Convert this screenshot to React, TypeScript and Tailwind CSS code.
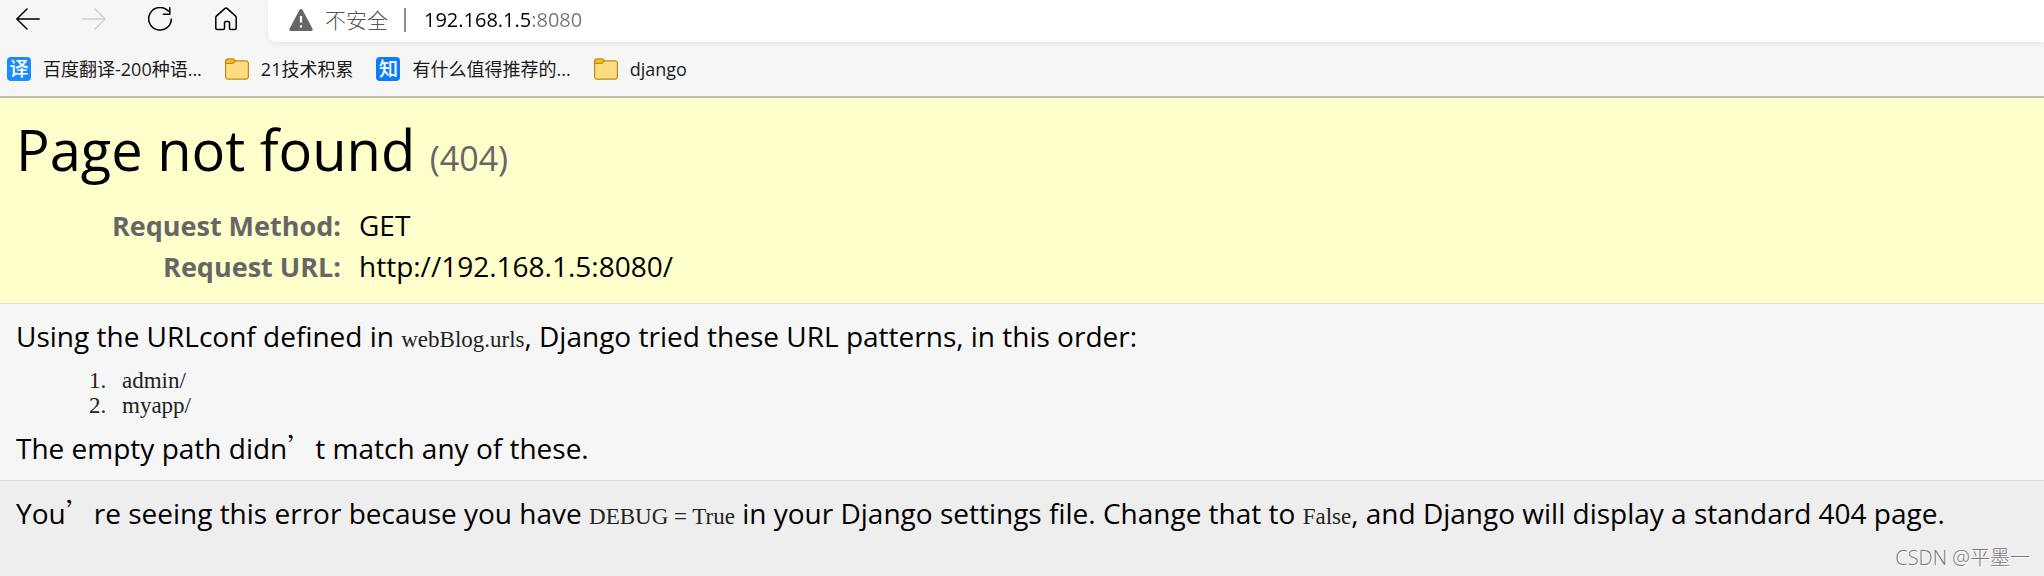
import type { ReactNode } from "react";

const PATTERNS = ["admin/", "myapp/"];

const META = [
  { label: "Request Method:", value: "GET" },
  { label: "Request URL:", value: "http://192.168.1.5:8080/" },
];

function NavButton({ label, disabled, children }: { label: string; disabled?: boolean; children: ReactNode }) {
  return (
    <button type="button" aria-label={label} disabled={disabled} className="text-black disabled:text-[#cfcfcf]">
      <svg viewBox="0 0 24 24" className="size-6" fill="none" stroke="currentColor" strokeWidth="1.5" strokeLinecap="round" strokeLinejoin="round">
        {children}
      </svg>
    </button>
  );
}

function FolderIcon() {
  return (
    <svg viewBox="0 0 24 24" className="size-6" strokeWidth="1.2" stroke="#c08a0c">
      <path d="M.6 4.5a2.5 2.5 0 0 1 2.5-2.5h5.2l2.4 1.9h10.2a2.5 2.5 0 0 1 2.5 2.5v13.2a2.5 2.5 0 0 1-2.5 2.5H3.1a2.5 2.5 0 0 1-2.5-2.5z" fill="#ffdc82" />
      <path d="M.6 4.5a2.5 2.5 0 0 1 2.5-2.5h4.7a1.8 1.8 0 0 1 1.3.5l1.3 1.4-1.6 1.8a1.8 1.8 0 0 1-1.3.6H.6z" fill="#f4bd2b" />
    </svg>
  );
}

function SiteIcon({ char, className }: { char: string; className: string }) {
  return (
    <span className={`flex size-6 items-center justify-center rounded-[4px] text-[19px] leading-6 font-medium text-white ${className}`}>
      {char}
    </span>
  );
}

function Bookmark({ icon, children }: { icon: ReactNode; children: ReactNode }) {
  return (
    <a href="#" className="flex items-center gap-3 text-[18px] leading-6 text-[#1a1a1a]">
      {icon}
      <span>{children}</span>
    </a>
  );
}

function Code({ children }: { children: ReactNode }) {
  return <code className="font-['Liberation_Serif',serif] text-[23px] leading-6 text-[#222]">{children}</code>;
}

// Full-width apostrophe, as the CJK font sets it
function Apostrophe() {
  return <span className="font-['Noto_Sans_CJK_SC',sans-serif] leading-6 font-light">’</span>;
}

function BrowserBar() {
  return (
    <header className="border-b-2 border-[#bdbdbd] bg-[#f6f6f6]">
      <div className="flex h-[42px]">
        <nav className="flex items-center gap-[42px] pr-[30px] pb-1 pl-4">
          <NavButton label="Back">
            <path d="M11 2 .8 12 11 22M.8 12h22.4" />
          </NavButton>
          <NavButton label="Forward" disabled>
            <path d="M13 2l10.2 10L13 22M23.2 12H.8" />
          </NavButton>
          <NavButton label="Refresh">
            <path d="M20.3 4.1A11.3 11.3 0 1 0 23.3 12M21.8.8v6.4h-6.4" />
          </NavButton>
          <NavButton label="Home">
            <path d="M1.8 10.6a2.2 2.2 0 0 1 .8-1.7L11 1.4a1.5 1.5 0 0 1 2 0l8.4 7.5a2.2 2.2 0 0 1 .8 1.7v10.6a1.3 1.3 0 0 1-1.3 1.3h-4.1a1.3 1.3 0 0 1-1.3-1.3v-5.4a1.3 1.3 0 0 0-1.3-1.3h-2.4a1.3 1.3 0 0 0-1.3 1.3v5.4a1.3 1.3 0 0 1-1.3 1.3H3.1a1.3 1.3 0 0 1-1.3-1.3z" />
          </NavButton>
        </nav>
        <div className="flex flex-1 items-center rounded-bl-lg bg-white pb-0.5 pl-[21px] shadow-[0_2px_6px_rgba(0,0,0,0.06)]">
          <svg viewBox="0 0 24 24" className="size-6" aria-hidden="true">
            <path d="M10.5 1.8a1.7 1.7 0 0 1 3 0l10 19a1.4 1.4 0 0 1-1.3 2.1H1.8a1.4 1.4 0 0 1-1.3-2.1z" fill="#666" />
            <path d="M12 8v6.5M12 17.2v2.2" stroke="#fff" strokeWidth="2.2" />
          </svg>
          <span className="ml-3 text-[21px] leading-6 font-light text-[#555]">不安全</span>
          <span className="ml-4 h-6 w-0.5 bg-[#909090]" />
          <input
            aria-label="Address"
            defaultValue="192.168.1.5:8080"
            className="ml-[18px] flex-1 bg-linear-to-r from-black from-[106px] to-[#767676] to-[106px] bg-clip-text text-[20px] leading-6 text-transparent caret-black outline-none"
          />
        </div>
      </div>
      <nav className="flex h-[54px] items-center gap-[23px] pl-[7px]">
        <Bookmark icon={<SiteIcon char="译" className="bg-[#1a8cff]" />}>百度翻译-200种语...</Bookmark>
        <Bookmark icon={<FolderIcon />}>21技术积累</Bookmark>
        <Bookmark icon={<SiteIcon char="知" className="bg-[#0a7cff]" />}>有什么值得推荐的...</Bookmark>
        <Bookmark icon={<FolderIcon />}>django</Bookmark>
      </nav>
    </header>
  );
}

export default function App() {
  return (
    <div className="relative min-h-screen bg-[#eee] font-['Open_Sans','Noto_Sans_CJK_SC',sans-serif] text-black">
      <BrowserBar />
      <main className="text-[28px] leading-10">
        <section className="border-b border-[#ddd] bg-[#ffffcc] px-4 pt-4 pb-4">
          <h1 className="text-[56px] leading-[70px]">
            Page not found <span className="text-[34px] text-[#666]">(404)</span>
          </h1>
          <table className="mt-3 leading-[41px]">
            <tbody>
              {META.map((row) => (
                <tr key={row.label}>
                  <th scope="row" className="w-[327px] pr-0.5 text-right text-[27px] font-bold text-[#666]">{row.label}</th>
                  <td className="pl-4">{row.value}</td>
                </tr>
              ))}
            </tbody>
          </table>
        </section>
        <section className="border-b border-[#ddd] bg-[#f6f6f6] px-4 py-3">
          <p>
            Using the URLconf defined in <Code>webBlog.urls</Code>, Django tried these URL patterns, in this order:
          </p>
          <ol className="mt-3 mb-2.5 list-decimal pl-24 font-['Liberation_Serif',serif] text-[23px] leading-[25px] text-[#222]">
            {PATTERNS.map((pattern) => (
              <li key={pattern} className="pl-2.5">{pattern}</li>
            ))}
          </ol>
          <p>
            The empty path didn<Apostrophe />t match any of these.
          </p>
        </section>
        <section className="px-4 pt-3">
          <p>
            You<Apostrophe />re seeing this error because you have <Code>DEBUG = True</Code> in your Django settings file. Change that to <Code>False</Code>, and Django will display a standard 404 page.
          </p>
        </section>
      </main>
      <footer className="absolute right-3.5 bottom-1 text-[20px] leading-7 font-light text-[#777] [text-shadow:1px_1px_0_#fff]">
        CSDN @平墨一
      </footer>
    </div>
  );
}
